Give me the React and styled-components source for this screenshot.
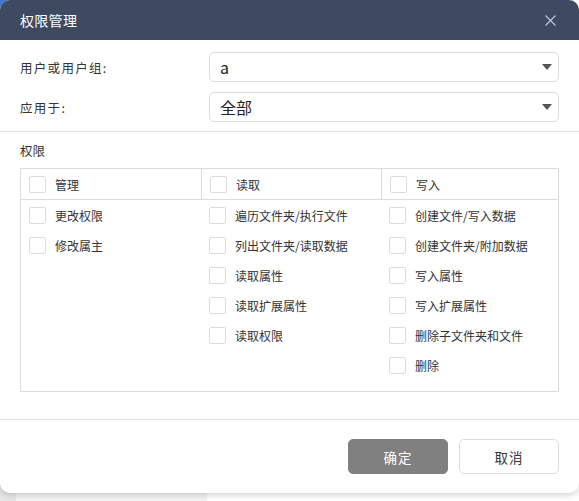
import React from "react";
import styled, { createGlobalStyle } from "styled-components";

const Global = createGlobalStyle`
  html, body { margin: 0; padding: 0; }
  body {
    width: 579px; height: 501px; overflow: hidden;
    font-family: "Noto Sans CJK SC", "Noto Sans", sans-serif;
    background: #ffffff;
  }
`;

const Page = styled.div`
  position: relative;
  width: 579px;
  height: 501px;
  display: flex;
  background: #ffffff;
`;

const SideEdge = styled.div`
  width: 16px;
  background: #e6e6e6;
`;

const SidePanel = styled.div`
  width: 191px;
  background: #f3f3f3;
`;

const CornerDot = styled.div`
  position: absolute;
  left: 0;
  top: 0;
  width: 10px;
  height: 10px;
  background: #3f7fd0;
`;

const Dialog = styled.div`
  position: absolute;
  left: 0;
  top: 0;
  width: 579px;
  height: 493px;
  background: #ffffff;
  border-radius: 10px;
  box-shadow: 0 2px 6px rgba(0, 0, 0, 0.18);
  display: flex;
  flex-direction: column;
  overflow: hidden;
`;

const Header = styled.div`
  height: 40px;
  flex: none;
  background: #3d4a61;
  display: flex;
  align-items: center;
  justify-content: space-between;
  padding: 0 23px 0 20px;
`;

const Title = styled.div`
  color: #ffffff;
  font-size: 14px;
  letter-spacing: 0.3px;
`;

const Close = styled.svg`
  width: 11px;
  height: 11px;
`;

const Form = styled.div`
  padding: 12px 20px 9px 20px;
  display: flex;
  flex-direction: column;
  gap: 10px;
  border-bottom: 1px solid #e3e3e3;
`;

const FormRow = styled.div`
  display: grid;
  grid-template-columns: 189px 350px;
  align-items: center;
`;

const Label = styled.div`
  font-size: 12.5px;
  color: #333;
  letter-spacing: 1.3px;
`;

const Select = styled.div`
  height: 28px;
  border: 1px solid #dcdcdc;
  border-radius: 5px;
  display: flex;
  align-items: center;
  justify-content: space-between;
  padding: 0 6px 0 10px;
  font-size: 16px;
  color: #222;
`;

const Caret = styled.svg`
  width: 10px;
  height: 6px;
`;

const Section = styled.div`
  padding: 10px 20px 0 20px;
  display: flex;
  flex-direction: column;
`;

const SectionTitle = styled.div`
  font-size: 12.5px;
  color: #333;
  height: 18px;
  line-height: 18px;
  margin-bottom: 8px;
`;

const Table = styled.div`
  border: 1px solid #dcdcdc;
  height: 222px;
  display: flex;
  flex-direction: column;
`;

const HeadRow = styled.div`
  display: grid;
  grid-template-columns: 180px 180px 1fr;
  height: 30px;
  border-bottom: 1px solid #dcdcdc;
`;

const HeadCell = styled.div`
  display: flex;
  align-items: center;
  gap: 9px;
  padding-left: 8px;
  border-left: ${(p) => (p.$first ? "none" : "1px solid #dcdcdc")};
  font-size: 12px;
  color: #333;
`;

const Body = styled.div`
  display: grid;
  grid-template-columns: 180px 180px 1fr;
  padding-top: 0;
`;

const Col = styled.div`
  display: flex;
  flex-direction: column;
  padding-left: ${(p) => (p.$first ? "8px" : "8px")};
`;

const Item = styled.div`
  height: 30px;
  display: flex;
  align-items: center;
  gap: 9px;
  font-size: 12px;
  color: #333;
`;

const Box = styled.span`
  box-sizing: border-box;
  width: 17px;
  height: 17px;
  border: 1px solid #dcdcdc;
  border-radius: 2px;
  background: #fff;
  flex: none;
`;

const Footer = styled.div`
  margin-top: auto;
  border-top: 1px solid #e3e3e3;
  height: 74px;
  display: flex;
  justify-content: flex-end;
  align-items: flex-start;
  padding: 19px 20px 0 0;
  gap: 11px;
  box-sizing: border-box;
`;

const Button = styled.button`
  width: 100px;
  height: 35px;
  border-radius: 5px;
  font-family: "Noto Sans CJK SC", sans-serif;
  font-size: 13.5px;
  border: 1px solid ${(p) => (p.$primary ? "#808080" : "#dcdcdc")};
  background: ${(p) => (p.$primary ? "#808080" : "#ffffff")};
  color: ${(p) => (p.$primary ? "#ffffff" : "#333")};
  letter-spacing: 1px;
  padding: 0;
`;

const columns = [
  { head: "管理", items: ["更改权限", "修改属主"] },
  { head: "读取", items: ["遍历文件夹/执行文件", "列出文件夹/读取数据", "读取属性", "读取扩展属性", "读取权限"] },
  { head: "写入", items: ["创建文件/写入数据", "创建文件夹/附加数据", "写入属性", "写入扩展属性", "删除子文件夹和文件", "删除"] },
];

export default function App() {
  return (
    <>
      <Global />
      <Page>
        <SideEdge />
        <SidePanel />
        <CornerDot />
        <Dialog>
          <Header>
            <Title>权限管理</Title>
            <Close viewBox="0 0 11 11">
              <path d="M0.5 0.5L10.5 10.5M10.5 0.5L0.5 10.5" stroke="#c3cad8" strokeWidth="1.1" fill="none" />
            </Close>
          </Header>
          <Form>
            <FormRow>
              <Label>用户或用户组:</Label>
              <Select>
                <span>a</span>
                <Caret viewBox="0 0 10 6"><path d="M0 0H10L5 6Z" fill="#555" /></Caret>
              </Select>
            </FormRow>
            <FormRow>
              <Label>应用于:</Label>
              <Select>
                <span>全部</span>
                <Caret viewBox="0 0 10 6"><path d="M0 0H10L5 6Z" fill="#555" /></Caret>
              </Select>
            </FormRow>
          </Form>
          <Section>
            <SectionTitle>权限</SectionTitle>
            <Table>
              <HeadRow>
                {columns.map((c, i) => (
                  <HeadCell key={c.head} $first={i === 0}>
                    <Box />
                    {c.head}
                  </HeadCell>
                ))}
              </HeadRow>
              <Body>
                {columns.map((c, i) => (
                  <Col key={c.head} $first={i === 0}>
                    {c.items.map((t) => (
                      <Item key={t}>
                        <Box />
                        {t}
                      </Item>
                    ))}
                  </Col>
                ))}
              </Body>
            </Table>
          </Section>
          <Footer>
            <Button $primary>确定</Button>
            <Button>取消</Button>
          </Footer>
        </Dialog>
      </Page>
    </>
  );
}
